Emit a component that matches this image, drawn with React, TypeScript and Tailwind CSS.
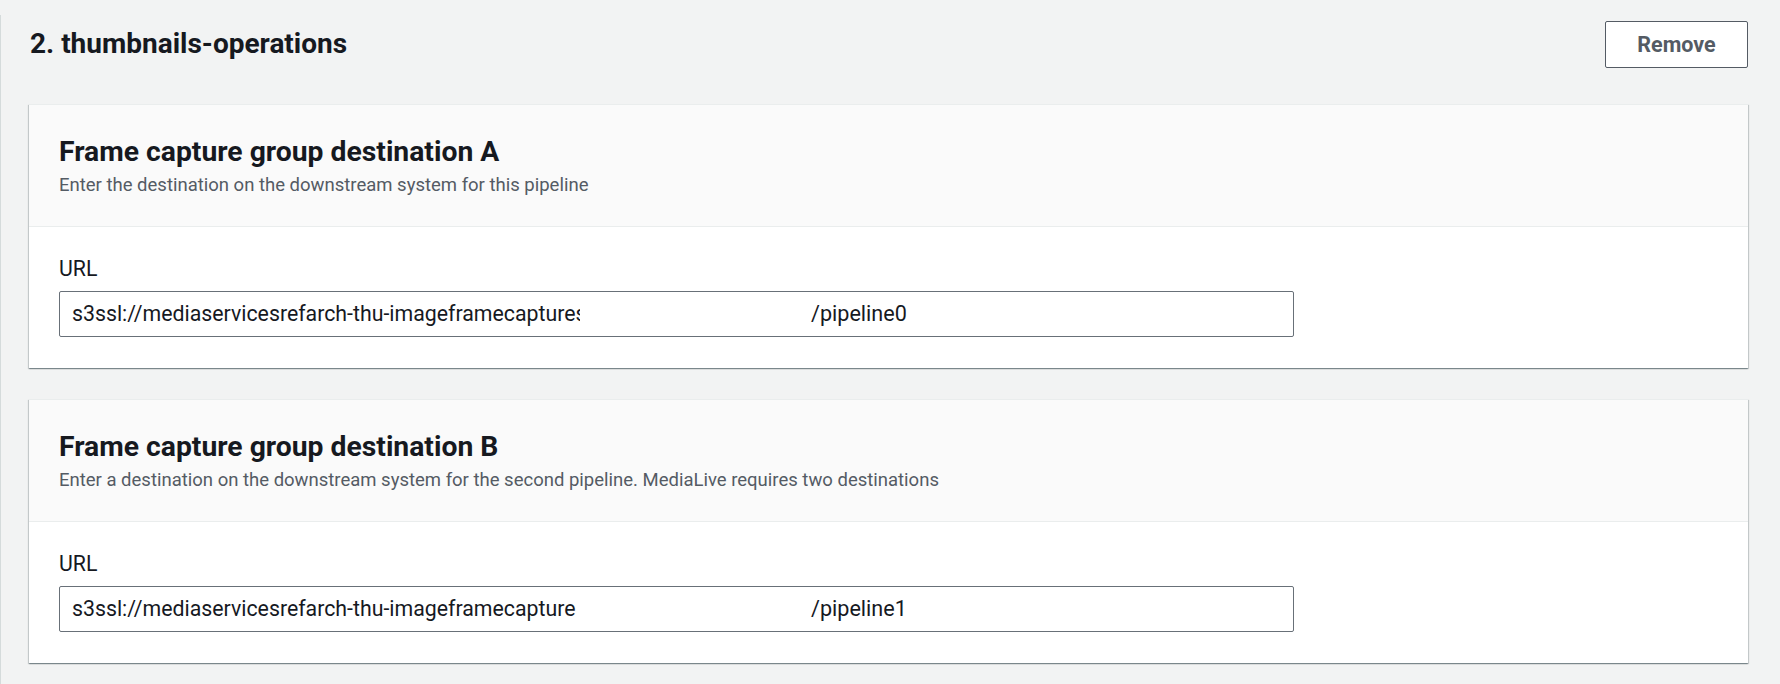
import React from "react";

const FONT = "font-['Roboto','Liberation_Sans',sans-serif]";

interface DestinationProps {
  title: string;
  description: string;
  path: string;
  clipped?: boolean;
  className?: string;
}

function DestinationCard({ title, description, path, clipped, className }: DestinationProps) {
  return (
    <div
      className={`border-t border-[#eaeded] bg-white shadow-[0_1px_1px_0_rgba(0,28,36,0.3),1px_1px_1px_0_rgba(0,28,36,0.15),-1px_1px_1px_0_rgba(0,28,36,0.15)] ${className ?? ""}`}
    >
      <div className="border-b border-[#eaeded] bg-[#fafafa] px-[30px] pt-[31px] pb-[30px]">
        <h3 className="text-[28.3px] font-bold leading-[32px] text-[#16191f]">{title}</h3>
        <p className="mt-[6px] text-[18.5px] leading-[22px] text-[#545b64]">{description}</p>
      </div>
      <div className="px-[30px] pt-[28px] pb-[31px]">
        <label className="block text-[21.3px] leading-[28px] text-[#16191f]">URL</label>
        <div className="mt-[8px] flex h-[46px] w-[1235px] items-center rounded-[2px] border border-[#687078] bg-white px-[12px] text-[21.3px] leading-[28px] text-[#16191f]">
          <span className="w-[739px] shrink-0 whitespace-nowrap">
            s3ssl://mediaservicesrefarch-thu-imageframecapture
            {clipped && (
              <span className="inline-block w-[5px] overflow-hidden align-bottom">s</span>
            )}
          </span>
          <span className="whitespace-nowrap text-[21.6px]">{path}</span>
        </div>
      </div>
    </div>
  );
}

export default function App() {
  return (
    <div className={`h-[684px] w-[1780px] overflow-hidden bg-[#f2f3f3] ${FONT}`}>
      <div className="mt-[15px] border-l border-[#d5dbdb] pl-[28px] pr-[32px] pb-[40px]">
        <div className="flex items-start justify-between">
          <h2 className="mt-[11px] pl-[1px] text-[28px] font-bold leading-[36px] text-[#16191f]">
            2. thumbnails-operations
          </h2>
          <button className="mt-[6px] h-[47px] w-[143px] rounded-[2px] border border-[#545b64] bg-white pt-[1px] text-[21.5px] font-bold text-[#545b64]">
            Remove
          </button>
        </div>
        <DestinationCard
          className="mt-[36px]"
          title="Frame capture group destination A"
          description="Enter the destination on the downstream system for this pipeline"
          path="/pipeline0"
          clipped
        />
        <DestinationCard
          className="mt-[31px]"
          title="Frame capture group destination B"
          description="Enter a destination on the downstream system for the second pipeline. MediaLive requires two destinations"
          path="/pipeline1"
        />
      </div>
    </div>
  );
}
